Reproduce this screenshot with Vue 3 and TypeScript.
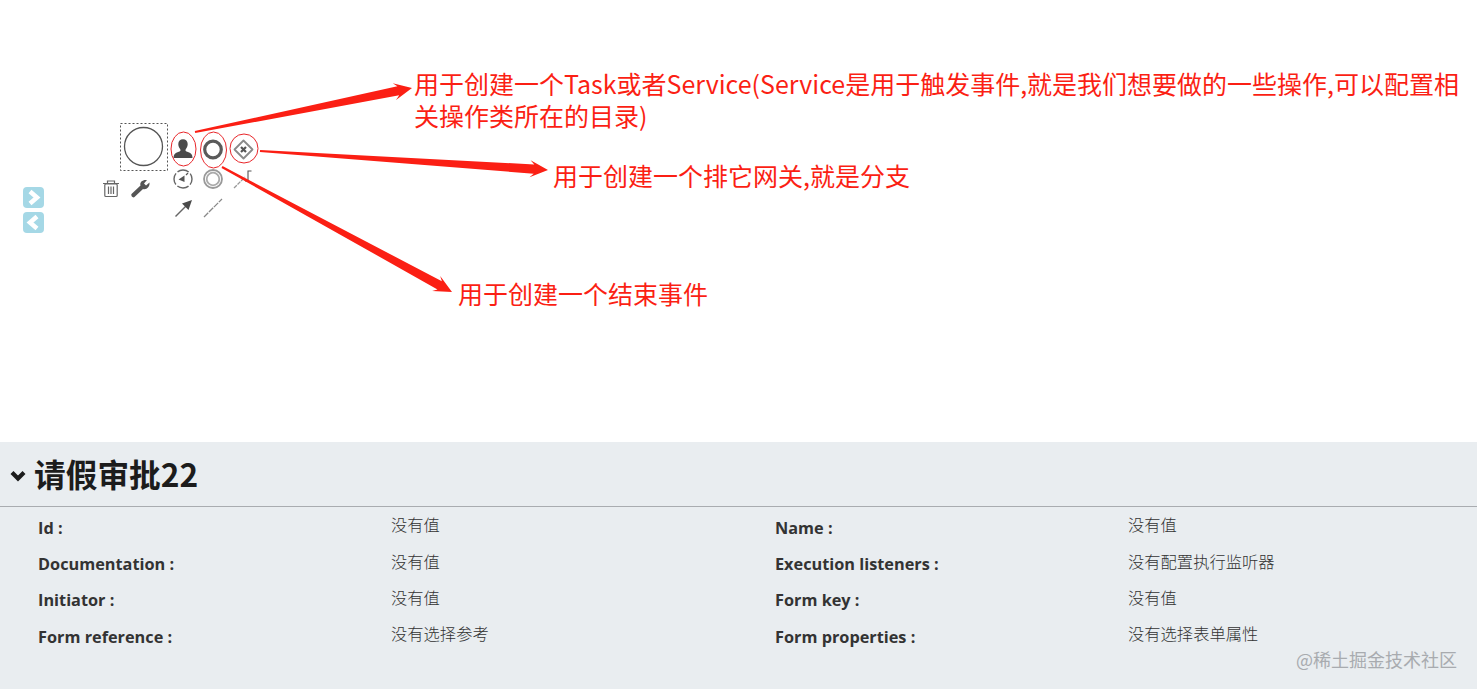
<script setup lang="ts">
type Row = { label: string; value: string };

const rows: Row[] = [
  { label: 'Id :', value: '没有值' },
  { label: 'Name :', value: '没有值' },
  { label: 'Documentation :', value: '没有值' },
  { label: 'Execution listeners :', value: '没有配置执行监听器' },
  { label: 'Initiator :', value: '没有值' },
  { label: 'Form key :', value: '没有值' },
  { label: 'Form reference :', value: '没有选择参考' },
  { label: 'Form properties :', value: '没有选择表单属性' },
];

// tapered red arrow, thin at the tail and widest at the head
function arrow(x1: number, y1: number, x2: number, y2: number) {
  const len = Math.hypot(x2 - x1, y2 - y1);
  const ux = (x2 - x1) / len;
  const uy = (y2 - y1) / len;
  const nx = -uy;
  const ny = ux;
  const at = (back: number, w: number) => {
    const x = x2 - ux * back + nx * w;
    const y = y2 - uy * back + ny * w;
    return `${x.toFixed(1)},${y.toFixed(1)}`;
  };
  return [
    at(len, 1),
    at(14, 4.6),
    at(18, 8.5),
    at(0, 0),
    at(18, -8.5),
    at(14, -4.6),
    at(len, -1),
  ].join(' ');
}

const arrows = [arrow(195, 132, 412, 88), arrow(260, 151, 548, 170), arrow(222, 167, 452, 292)];
</script>

<template>
  <div class="page">
    <section class="canvas">
      <svg class="diagram" width="1477" height="442" viewBox="0 0 1477 442">
        <!-- start event selection -->
        <rect x="120.500" y="123.500" width="47" height="47" fill="none" stroke="#555" stroke-dasharray="2 2" />
        <circle cx="143.500" cy="146.500" r="19" fill="#fff" stroke="#555" stroke-width="1.300" />

        <!-- user task -->
        <path d="M173.500 158 c0-3.800 2-5.200 6-6.500 c1.200-.5 1.200-1.500 .6-2.500 c-1.300-1.500-1.800-3.300-1.800-5 c0-3 2-4.800 4.700-4.800 s4.700 1.800 4.700 4.800 c0 1.700-.5 3.500-1.800 5 c-.6 1-.6 2 .6 2.500 c4 1.300 6 2.700 6 6.500 z" fill="#4a4a4a" />
        <!-- end event -->
        <circle cx="213" cy="149.500" r="8.300" fill="none" stroke="#5a5a5a" stroke-width="3.200" />
        <!-- gateway -->
        <path d="M243.500 140.500 L252.500 149.500 L243.500 158.500 L234.500 149.500 Z" fill="none" stroke="#8a8a8a" stroke-width="1.800" stroke-linejoin="round" />
        <path d="M241 147 L246 152 M246 147 L241 152" stroke="#555" stroke-width="2.200" />

        <!-- second row -->
        <circle cx="183" cy="179" r="9" fill="none" stroke="#666" stroke-width="1.400" stroke-dasharray="12 2.100" stroke-dashoffset="6" />
        <path d="M178.500 179.500 L184.500 175.500 L184.500 182 Z" fill="#555" />
        <path d="M186 175 L188 173" stroke="#555" stroke-width="1.200" />
        <circle cx="213" cy="179" r="9" fill="none" stroke="#999" stroke-width="1.800" />
        <circle cx="213" cy="179" r="6.300" fill="none" stroke="#aaa" stroke-width="1.800" />
        <path d="M234 188 L245 177" stroke="#999" stroke-width="1.300" stroke-dasharray="4 1" />
        <path d="M251.500 171 h-3.500 v10 h-3" fill="none" stroke="#555" stroke-width="1.100" />

        <!-- trash + wrench -->
        <g fill="none" stroke="#666" stroke-width="1.200">
          <path d="M103 183.500 H119 M107.500 183.500 V181 H114.500 V183.500" />
          <rect x="104.800" y="184" width="12.400" height="12.500" rx="1" />
          <path d="M108.500 186.500 V194 M111 186.500 V194 M113.500 186.500 V194" />
        </g>
        <path d="M131.500 194 L140.500 185.500 C139.500 182 142.500 179.500 147 180 L144 183.500 L146 185.500 L149.500 182.500 C150 187 146.500 190 143 189 L134.500 197 C133 198.500 130.500 195.500 131.500 194 Z" fill="#555" />

        <!-- third row -->
        <path d="M175.500 216.500 L186 206" stroke="#666" stroke-width="1.400" />
        <path d="M192 200 L188.500 210 L182 203.500 Z" fill="#4a4a4a" />
        <path d="M204 217 L222 199" stroke="#888" stroke-width="1.300" stroke-dasharray="6 1" />

        <!-- collapse toggles -->
        <rect x="23" y="187" width="21" height="21" rx="4" fill="#a5d8e6" />
        <path d="M30 191.500 L37 197.500 L30 203.500" fill="none" stroke="#fff" stroke-width="4.500" />
        <rect x="23" y="212" width="21" height="21" rx="4" fill="#a5d8e6" />
        <path d="M37 216.500 L30 222.500 L37 228.500" fill="none" stroke="#fff" stroke-width="4.500" />

        <!-- hand-drawn annotations -->
        <g fill="none" stroke="#e8262a" stroke-width="1">
          <ellipse cx="183.500" cy="149" rx="12.500" ry="17" />
          <ellipse cx="213.500" cy="150" rx="13" ry="18" />
          <ellipse cx="244" cy="148.500" rx="14" ry="14.500" />
        </g>
        <polygon v-for="(points, i) in arrows" :key="i" :points="points" fill="#fb1f14" />
      </svg>

      <p class="note note--task">用于创建一个Task或者Service(Service是用于触发事件,就是我们想要做的一些操作,可以配置相关操作类所在的目录)</p>
      <p class="note note--gateway">用于创建一个排它网关,就是分支</p>
      <p class="note note--end">用于创建一个结束事件</p>
    </section>

    <section class="panel">
      <header class="panel__header">
        <svg class="panel__chevron" width="16" height="12" viewBox="0 0 16 12">
          <path d="M2 2.500 L8 8.500 L14 2.500" fill="none" stroke="#1c1c1c" stroke-width="4.200" />
        </svg>
        <h1 class="panel__title">请假审批22</h1>
      </header>
      <div class="panel__grid">
        <div v-for="row in rows" :key="row.label" class="prop">
          <span class="prop__label">{{ row.label }}</span>
          <span class="prop__value">{{ row.value }}</span>
        </div>
      </div>
      <span class="watermark">@稀土掘金技术社区</span>
    </section>
  </div>
</template>

<style>
html,
body {
  background: #fff;
  margin: 0;
}
</style>

<style scoped>
.page {
  display: flex;
  flex-direction: column;
  font-family: 'Open Sans', 'Noto Sans CJK SC', sans-serif;
  height: 689px;
  overflow: hidden;
  width: 1477px;
}

.canvas {
  flex: 0 0 442px;
  position: relative;
}

.diagram {
  display: block;
}

.note {
  color: #fb1f14;
  font-family: 'Noto Sans CJK SC', sans-serif;
  font-size: 25px;
  line-height: 32px;
  margin: 0;
  position: absolute;
}

.note--task {
  left: 414px;
  top: 67px;
  width: 1050px;
}

.note--gateway {
  left: 553px;
  top: 159px;
}

.note--end {
  left: 458px;
  top: 277px;
}

.panel {
  background: #e9edf0;
  flex: 1;
  position: relative;
}

.panel__header {
  align-items: center;
  border-bottom: 1px solid #a9acb0;
  box-sizing: border-box;
  display: flex;
  gap: 8px;
  height: 65px;
  padding: 0 0 0 10px;
}

.panel__chevron {
  position: relative;
  top: 2px;
}

.panel__title {
  color: #1c1c1c;
  font-family: 'Noto Sans CJK SC', sans-serif;
  font-size: 31.7px;
  font-weight: 700;
  line-height: 1;
  margin: 0;
}

.panel__grid {
  display: grid;
  grid-auto-rows: 36.4px;
  grid-template-columns: 737px 1fr;
  padding: 3px 0 0 38px;
}

.prop {
  align-items: center;
  display: grid;
  grid-template-columns: 353px 1fr;
}

.prop__label {
  color: #333;
  font-size: 16.3px;
  font-weight: 700;
  position: relative;
  top: -0.5px;
}

.prop__value {
  color: #333;
  font-family: 'Noto Sans CJK SC', sans-serif;
  font-size: 16.3px;
  font-weight: 300;
  position: relative;
  top: -4px;
}

.watermark {
  bottom: 18px;
  color: #a8abaf;
  font-family: 'Noto Sans CJK SC', sans-serif;
  font-size: 18px;
  line-height: 24px;
  position: absolute;
  right: 20px;
}
</style>
